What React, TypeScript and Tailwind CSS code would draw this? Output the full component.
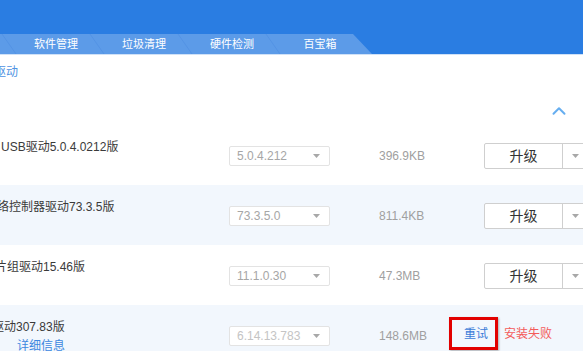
import { ChevronUp } from "lucide-react";

const font = "font-['Liberation_Sans','Noto_Sans_CJK_SC',sans-serif]";

type Row = {
  prefix: string;
  title: string;
  shift: string;
  version: string;
  size: string;
  alt: boolean;
  failed?: boolean;
};

const rows: Row[] = [
  { prefix: "", title: "USB驱动5.0.4.0212版", shift: "ml-[1px]", version: "5.0.4.212", size: "396.9KB", alt: false },
  { prefix: "网", title: "络控制器驱动73.3.5版", shift: "ml-[-15px]", version: "73.3.5.0", size: "811.4KB", alt: true },
  { prefix: "芯", title: "片组驱动15.46版", shift: "ml-[-17px]", version: "11.1.0.30", size: "47.3MB", alt: false },
  { prefix: "显卡驱", title: "动307.83版", shift: "ml-[-32px]", version: "6.14.13.783", size: "148.6MB", alt: true, failed: true },
];

const tabs = ["软件管理", "垃圾清理", "硬件检测", "百宝箱"];

function Caret({ className }: { className?: string }) {
  return (
    <svg width="7" height="4" viewBox="0 0 7 4" className={className}>
      <path d="M0 0h7L3.5 4z" fill="#a8a8a8" />
    </svg>
  );
}

function DriverRow({ row }: { row: Row }) {
  return (
    <div className={`relative flex h-[60px] ${row.alt ? "bg-[#f2f7fd]" : "bg-white"}`}>
      <div className="flex w-[229px] shrink-0 flex-col overflow-hidden">
        <div className={`mt-[14px] whitespace-nowrap text-[12px] leading-[16px] text-[#3a3a3a] ${row.shift}`}>
          {row.prefix}
          {row.title}
        </div>
        {row.failed && (
          <div className="ml-[17px] mt-[3px] text-[12px] leading-[16px] text-[#3c87e0]">详细信息</div>
        )}
      </div>
      <div className="mt-[21px] flex h-[20px] w-[101px] shrink-0 items-center justify-between rounded-[2px] border border-[#e3e3e3] bg-white pl-[7px] pr-[9px]">
        <span className={`text-[12px] ${row.failed ? "text-[#c4c4c4]" : "text-[#a6a6a6]"}`}>{row.version}</span>
        <Caret />
      </div>
      <div className="ml-[49px] mt-[23px] w-[70px] shrink-0 text-[12px] leading-[16px] text-[#a0a0a0]">{row.size}</div>
      {row.failed ? (
        <div className="mt-[21px] flex h-[16px] items-center">
          <span className="ml-[15px] text-[12px] text-[#3a7bd8]">重试</span>
          <span className="ml-[16px] text-[12px] text-[#f45b5b]">安装失败</span>
        </div>
      ) : (
        <div className="ml-[35px] mt-[18px] flex h-[26px] shrink-0 rounded-[2px] border border-[#cfcfcf] bg-white">
          <div className="flex w-[78px] items-center justify-center border-r border-[#cfcfcf] text-[14px] text-[#333]">
            升级
          </div>
          <div className="flex w-[24px] items-center justify-center">
            <Caret />
          </div>
        </div>
      )}
      {row.failed && (
        <div className="absolute left-[449px] top-[12px] h-[33px] w-[49px] border-[3px] border-[#e20000] shadow-[1px_1px_2px_rgba(0,0,0,0.3)]" />
      )}
    </div>
  );
}

export default function App() {
  return (
    <div className={`h-[351px] w-[583px] overflow-hidden bg-white ${font}`}>
      <div className="flex h-[54px] items-end bg-[#2a7de2]">
        <div className="relative flex h-[20px] w-[372px] bg-[#5c9be8] pl-[12px] [clip-path:polygon(0_0,353px_0,372px_100%,0_100%)]">
          <svg className="absolute inset-0" width="372" height="20">
            {[0, 88, 176, 264].map((x) => (
              <line key={x} x1={x + 2} y1={0} x2={x + 16} y2={20} stroke="#5393e4" strokeWidth="1" />
            ))}
          </svg>
          {tabs.map((t) => (
            <div key={t} className="relative flex w-[88px] items-center justify-center text-[11px] text-white">
              {t}
            </div>
          ))}
        </div>
      </div>
      <div className="h-[1px] bg-[#cfe1f7]" />
      <div className="relative h-[70px]">
        <div className="ml-[-30px] pt-[9px] text-[12px] leading-[16px] text-[#4f93e2]">显卡驱动</div>
        <ChevronUp className="absolute left-[548px] top-[45px] h-[22px] w-[22px] text-[#66aef0]" strokeWidth={2.2} />
      </div>
      {rows.map((r) => (
        <DriverRow key={r.version} row={r} />
      ))}
    </div>
  );
}
